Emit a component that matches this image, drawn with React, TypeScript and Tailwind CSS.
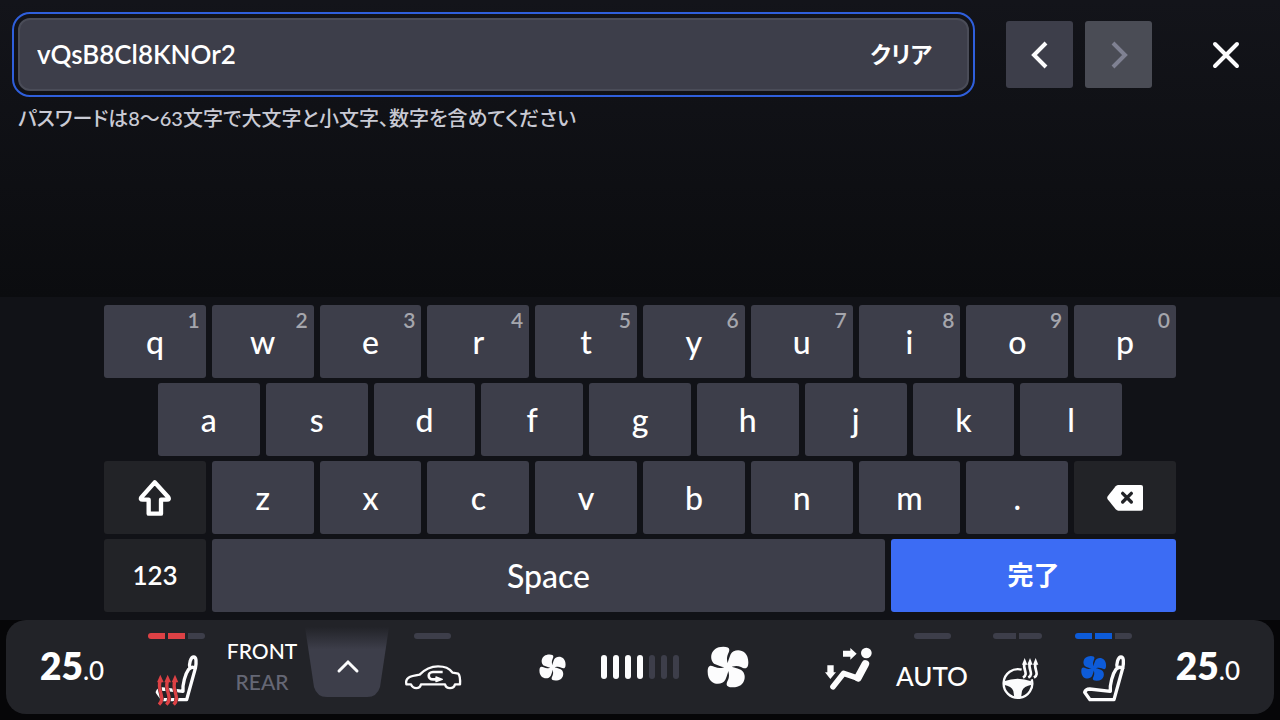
import { useState } from 'react'
import type { ReactNode } from 'react'
import clsx from 'clsx'

const TOP_ROW = ['q', 'w', 'e', 'r', 't', 'y', 'u', 'i', 'o', 'p']
const HOME_ROW = ['a', 's', 'd', 'f', 'g', 'h', 'j', 'k', 'l']
const BOTTOM_ROW = ['z', 'x', 'c', 'v', 'b', 'n', 'm', '.']

interface KeyProps {
  children: ReactNode
  hint?: string
  label?: string
  className?: string
  onClick?: () => void
}

function Key({ children, hint, label, className, onClick }: KeyProps) {
  return (
    <button
      type="button"
      aria-label={label}
      onClick={onClick}
      className={clsx(
        'relative flex h-[73px] items-center justify-center rounded-[3px] text-white',
        className ?? 'col-span-2 bg-[#3d3e4a] text-[32px]'
      )}
    >
      {hint && (
        <span className="absolute top-0 right-[6px] text-[21px] leading-[29px] font-semibold text-[#a5a6ad]">{hint}</span>
      )}
      {children}
    </button>
  )
}

function ShiftIcon() {
  return (
    <svg viewBox="143 87 102 114" className="h-[38px] w-[34px]" fill="none" stroke="currentColor" strokeWidth="13" strokeLinejoin="round">
      <path d="M193 97 L153 142 Q149 149 157 149 H175 V191 H212 V149 H230 Q238 149 234 142 Z" />
    </svg>
  )
}

function BackspaceIcon() {
  return (
    <svg viewBox="744 102 108 84" className="h-7 w-9">
      <path
        d="M778 105 H846 Q852 105 852 111 V176 Q852 182 846 182 H778 Q774 182 770 178 L746 148 Q743 143 746 139 L770 109 Q774 105 778 105 Z"
        fill="currentColor"
      />
      <path d="M791 130 L817 156 M817 130 L791 156" stroke="#222327" strokeWidth="10" strokeLinecap="round" />
    </svg>
  )
}

const BLADE = 'M4 4 C-12 2 -26 -3 -38 -8 C-58 -18 -56 -61 -14 -61 C11 -61 4 -47 0 -39 C-5 -28 -4 -14 4 -5 Z'

function FanBlades() {
  return (
    <g>
      <circle r="11" />
      <path d={BLADE} />
      <path d={BLADE} transform="rotate(90)" />
      <path d={BLADE} transform="rotate(180)" />
      <path d={BLADE} transform="rotate(270)" />
    </g>
  )
}

function FanIcon({ className }: { className: string }) {
  return (
    <svg viewBox="-63 -63 126 126" className={className} fill="currentColor">
      <FanBlades />
    </svg>
  )
}

function SeatOutline() {
  return (
    <g fill="none" stroke="#fcfcfd" strokeWidth="10" strokeLinejoin="round">
      <path d="M149 237 L211 244 C209 222 218 192 228 178 Q238 167 248 175 L222 269 H150 L134 247 Q137 237 149 237 Z" />
      <path d="M232 174 C228 162 234 141 243 141 C251 141 252 154 248 176" />
    </g>
  )
}

function HeatedSeatIcon() {
  return (
    <svg viewBox="124 132 135 156" className="h-[52px] w-[45px]">
      <SeatOutline />
      {[143, 165, 187].map((x) => (
        <g key={x} transform={`translate(${x} 0)`}>
          <path d="M-4 284 C18 262 -12 240 0 212" fill="none" stroke="#222327" strokeWidth="12" />
          <path d="M-4 284 C18 262 -12 240 0 212" fill="none" stroke="#dd4145" strokeWidth="10" />
          <path d="M0 194 L10 217 H-10 Z" fill="#dd4145" />
        </g>
      ))}
    </svg>
  )
}

function VentedSeatIcon() {
  return (
    <svg viewBox="123 132 135 156" className="h-[52px] w-[45px]">
      <SeatOutline />
      <g fill="#0d5bd8" transform="translate(161 175) scale(0.61)">
        <FanBlades />
      </g>
    </svg>
  )
}

function RecirculationIcon() {
  return (
    <svg viewBox="581 132 174 120" className="h-10 w-[58px]" fill="none" stroke="#fcfcfd" strokeWidth="7" strokeLinejoin="round">
      <path d="M602 223 H588 C584 204 596 199 628 194 C645 176 660 169 683 169 C705 169 715 174 727 188 L744 191 C750 198 750 208 749 223 H734 C730 238 708 238 704 223 H632 C628 238 608 238 602 223 Z" />
      <path d="M697 186 H668 C651 186 651 208 668 208 H680" strokeWidth="8" />
      <path d="M677 201 L696 208 L677 215 Z" fill="#fcfcfd" strokeWidth="4" />
    </svg>
  )
}

function AirflowIcon() {
  return (
    <svg viewBox="72 101 150 141" className="h-[47px] w-[50px]" fill="#fcfcfd">
      <path d="M129 121 H151 V113 L170 130 L151 148 V139 H129 Z" />
      <path d="M82 165 H101 V186 H108 L91 206 L75 186 H82 Z" />
      <circle cx="199" cy="128" r="16" />
      <g fill="none" stroke="#fcfcfd" strokeLinecap="round" strokeLinejoin="round">
        <path d="M99 229 L131 189 L175 204" strokeWidth="17" />
        <path d="M174 202 L196 161" strokeWidth="23" />
      </g>
    </svg>
  )
}

function HeatedWheelIcon() {
  return (
    <svg viewBox="590 132 126 144" className="h-12 w-[42px]">
      <path d="M694 208 A43 43 0 1 1 664 179" fill="none" stroke="#fcfcfd" strokeWidth="7" />
      <path d="M611 214 Q652 199 693 214 L694 224 Q670 228 665 243 L662 263 H642 L639 243 Q634 228 610 224 Z" fill="#fcfcfd" />
      {[673, 689, 706].map((x) => (
        <g key={x} transform={`translate(${x} 0)`}>
          <path d="M-5 203 C14 192 -8 176 0 158" fill="none" stroke="#fcfcfd" strokeWidth="8" />
          <path d="M0 144 L8 164 H-8 Z" fill="#fcfcfd" />
        </g>
      ))}
    </svg>
  )
}

interface LevelProps {
  total: number
  value?: number
  segment?: string
  active?: string
}

function Level({ total, value = 0, segment = 'w-[17px]', active = '' }: LevelProps) {
  return (
    <span className="flex h-[6px] gap-[3px] overflow-hidden rounded-full">
      {Array.from({ length: total }, (_, i) => (
        <span key={i} className={clsx('h-full', segment, i < value ? active : 'bg-[#3d3e4a]')} />
      ))}
    </span>
  )
}

function ClimateButton({ label, level, children }: { label: string; level: ReactNode; children: ReactNode }) {
  return (
    <button type="button" aria-label={label} className="flex h-full flex-col items-center gap-[15px] pt-[13px]">
      {level}
      {children}
    </button>
  )
}

function Temperature({ whole, fraction }: { whole: string; fraction: string }) {
  return (
    <p className="pb-[3px] leading-none text-white">
      <span className="text-[37px] font-extrabold">{whole}</span>
      <span className="text-[26px]">.{fraction}</span>
    </p>
  )
}

function ClimateBar() {
  return (
    <footer className="bg-[#060608] px-[6px] pb-[6px]">
      <div className="grid h-[94px] grid-cols-[126fr_88fr_84fr_86fr_85fr_330fr_88fr_78fr_93fr_79fr_131fr] items-center rounded-[20px] bg-[#222328]">
        <div className="pl-[34px]">
          <Temperature whole="25" fraction="0" />
        </div>
        <ClimateButton label="シートヒーター" level={<Level total={3} value={2} active="bg-[#dd4145]" />}>
          <HeatedSeatIcon />
        </ClimateButton>
        <button type="button" className="flex flex-col items-center pb-[2px] text-[21px] leading-[31px]">
          <span className="text-white">FRONT</span>
          <span className="text-[#656775]">REAR</span>
        </button>
        <button type="button" aria-label="開く" className="flex h-full justify-center">
          <svg viewBox="0 0 84 94" className="h-[94px] w-[84px]" fill="none">
            <defs>
              <linearGradient id="tab" x1="0" y1="0" x2="0" y2="1">
                <stop offset="0" stopColor="#3d3e4a" stopOpacity="0" />
                <stop offset="0.32" stopColor="#3d3e4a" />
              </linearGradient>
            </defs>
            <path d="M0 7 H84 L75 67 Q72 77 62 77 H22 Q12 77 9 67 Z" fill="url(#tab)" />
            <path d="M34 51 L43 42 L52 51" stroke="#fcfcfd" strokeWidth="3" strokeLinecap="round" />
          </svg>
        </button>
        <ClimateButton label="内気循環" level={<Level total={1} segment="w-[37px]" />}>
          <RecirculationIcon />
        </ClimateButton>
        <div className="flex items-center justify-center gap-7 text-[#fcfcfd]">
          <button type="button" aria-label="風量を下げる" className="flex w-[42px] justify-center">
            <FanIcon className="size-[27px]" />
          </button>
          <div className="flex gap-[6px]">
            {Array.from({ length: 7 }, (_, i) => (
              <span key={i} className={clsx('h-6 w-[6px] rounded-full', i < 4 ? 'bg-[#fcfcfd]' : 'bg-[#3d3e4a]')} />
            ))}
          </div>
          <button type="button" aria-label="風量を上げる">
            <FanIcon className="size-[42px]" />
          </button>
        </div>
        <button type="button" aria-label="吹き出し口" className="flex justify-center">
          <AirflowIcon />
        </button>
        <ClimateButton label="AUTO" level={<Level total={1} segment="w-[37px]" />}>
          <span className="text-[26px] leading-[44px] text-white">AUTO</span>
        </ClimateButton>
        <ClimateButton label="ステアリングヒーター" level={<Level total={2} segment="w-[23px]" />}>
          <HeatedWheelIcon />
        </ClimateButton>
        <ClimateButton label="シートベンチレーション" level={<Level total={3} value={2} active="bg-[#0d5bd8]" />}>
          <VentedSeatIcon />
        </ClimateButton>
        <div className="flex justify-end pr-[34px]">
          <Temperature whole="25" fraction="0" />
        </div>
      </div>
    </footer>
  )
}

export default function App() {
  const [value, setValue] = useState('vQsB8Cl8KNOr2')

  const type = (char: string) => setValue((v) => v + char)

  return (
    <div className="flex min-h-screen flex-col bg-[#111217] font-['Lato','Noto_Sans_CJK_JP',sans-serif] font-medium">
      <main className="flex-1 bg-linear-to-b from-[#13141a] to-[#0b0c0f] pt-[18px] pr-[21px] pl-[18px]">
        <div className="flex items-center">
          <div className="flex h-[73px] flex-1 items-center rounded-xl border-2 border-[#4a4c58] bg-[#3d3e4a] pr-[35px] pl-[17px] outline-2 outline-offset-4 outline-[#2f5fdc]">
            <input
              type="text"
              aria-label="パスワード"
              aria-describedby="password-rule"
              value={value}
              onChange={(e) => setValue(e.target.value)}
              className="min-w-0 flex-1 bg-transparent text-[26px] font-semibold text-white outline-none"
            />
            <button type="button" onClick={() => setValue('')} className="text-[23px] font-bold text-white [font-feature-settings:'palt']">
              クリア
            </button>
          </div>
          <button type="button" aria-label="前へ" className="ml-[37px] flex size-[67px] items-center justify-center rounded-[3px] bg-[#3d3e4a]">
            <svg viewBox="0 0 18 28" className="h-7 w-[18px]" fill="none" stroke="#fcfcfd" strokeWidth="4">
              <path d="M15 2 L3 14 L15 26" />
            </svg>
          </button>
          <button type="button" aria-label="次へ" disabled className="ml-3 flex size-[67px] items-center justify-center rounded-[3px] bg-[#4a4c55]">
            <svg viewBox="0 0 18 28" className="h-7 w-[18px]" fill="none" stroke="#7f8192" strokeWidth="4">
              <path d="M3 2 L15 14 L3 26" />
            </svg>
          </button>
          <button type="button" aria-label="閉じる" className="ml-10 flex size-[67px] items-center justify-center">
            <svg viewBox="0 0 28 28" className="size-7" fill="none" stroke="#fcfcfd" strokeWidth="4" strokeLinecap="round">
              <path d="M3 3 L25 25 M25 3 L3 25" />
            </svg>
          </button>
        </div>
        <p id="password-rule" className="mt-3 text-[20px] leading-[30px] text-[#c9cad4] [font-feature-settings:'palt']">
          パスワードは8〜63文字で大文字と小文字、数字を含めてください
        </p>
      </main>

      <section className="flex flex-col gap-[5px] px-26 py-2">
        <div className="grid grid-cols-20 gap-x-[6px] gap-y-[5px]">
          {TOP_ROW.map((char, i) => (
            <Key key={char} hint={String((i + 1) % 10)} onClick={() => type(char)}>
              {char}
            </Key>
          ))}
          <span />
          {HOME_ROW.map((char) => (
            <Key key={char} onClick={() => type(char)}>
              {char}
            </Key>
          ))}
          <span />
          <Key label="Shift" className="col-span-2 bg-[#222327]">
            <ShiftIcon />
          </Key>
          {BOTTOM_ROW.map((char) => (
            <Key key={char} onClick={() => type(char)}>
              {char}
            </Key>
          ))}
          <Key label="Backspace" className="col-span-2 bg-[#222327]" onClick={() => setValue((v) => v.slice(0, -1))}>
            <BackspaceIcon />
          </Key>
        </div>
        <div className="grid grid-cols-[102fr_673fr_285fr] gap-[6px]">
          <Key className="bg-[#222327] text-[26px] font-semibold">123</Key>
          <Key className="bg-[#3d3e4a] text-[32px]" onClick={() => type(' ')}>
            Space
          </Key>
          <Key className="bg-[#3c6cf4] text-[26px] font-bold">完了</Key>
        </div>
      </section>

      <ClimateBar />
    </div>
  )
}
